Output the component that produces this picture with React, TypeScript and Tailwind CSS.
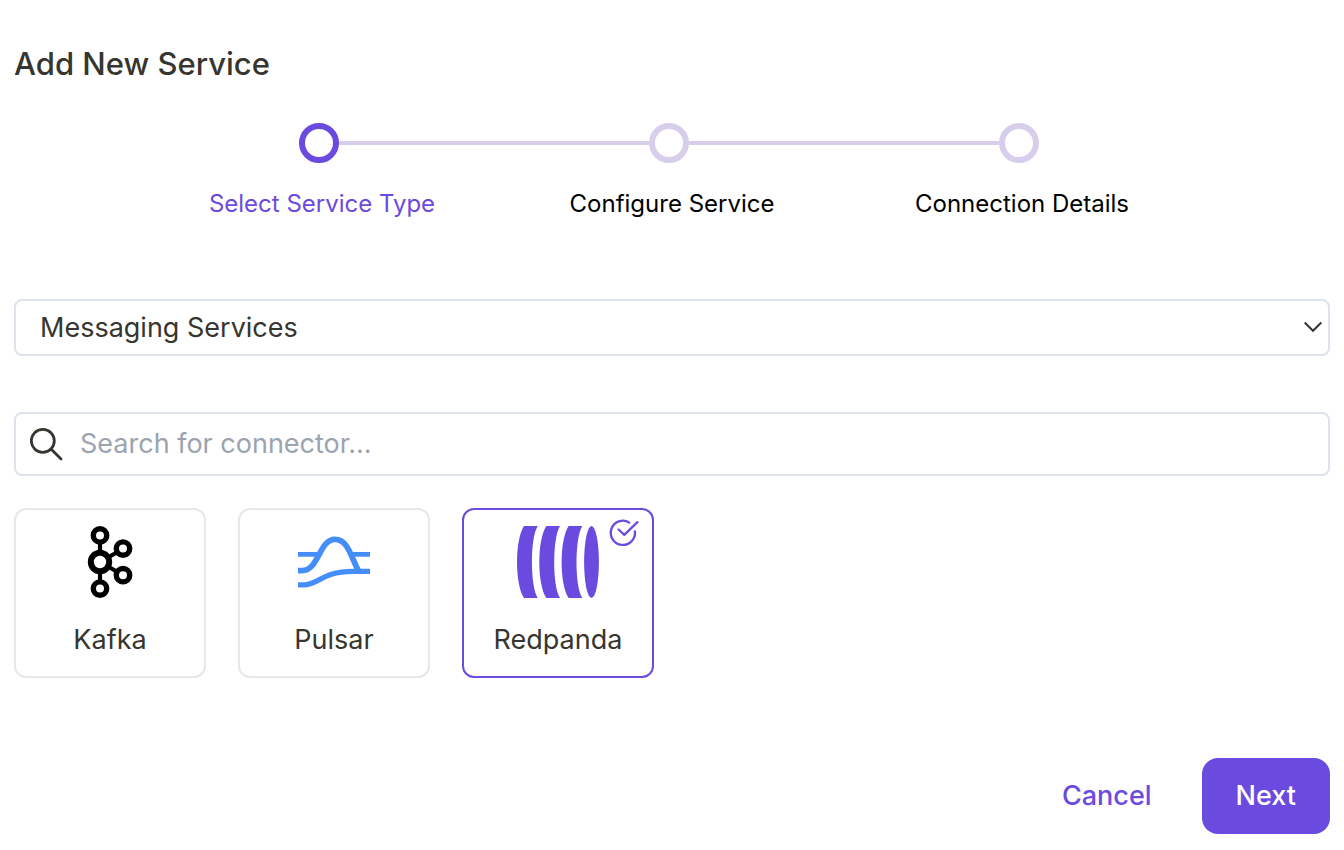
import { useState, type ReactNode } from "react";

const steps = ["Select Service Type", "Configure Service", "Connection Details"];

function KafkaIcon() {
  return (
    <svg viewBox="0 0 72 72" className="h-[72px] w-[72px]" fill="none" stroke="#000" aria-hidden="true">
      <path d="M26 16v12M26 44v12M34 31.500l9-5.200M34 40.500l9 5.200" strokeWidth="4.200" />
      <circle cx="26" cy="9.400" r="6.700" strokeWidth="5.400" />
      <circle cx="26" cy="36" r="9.200" strokeWidth="6" />
      <circle cx="26" cy="62.600" r="6.700" strokeWidth="5.400" />
      <circle cx="49" cy="22.600" r="6.700" strokeWidth="5.400" />
      <circle cx="49" cy="49.200" r="6.700" strokeWidth="5.400" />
    </svg>
  );
}

function PulsarIcon() {
  return (
    <svg viewBox="0 0 72 72" className="h-[72px] w-[72px]" fill="none" stroke="#458ef8" aria-hidden="true">
      <path d="M0 28.400H21M54 28.400H72" strokeWidth="4.800" />
      <path d="M0 44.600H4C21 44.600 21 13.400 37 13.400C50 13.400 53 31 60.500 45" strokeWidth="5.800" />
      <path d="M0 58.900H6C20 58.900 24 45.400 55 45.400H72" strokeWidth="5.200" />
    </svg>
  );
}

function RedpandaIcon() {
  return (
    <svg viewBox="0 0 82 72" className="h-[72px] w-[82px]" fill="#6b4adf" aria-hidden="true">
      <path d="M7 0H20.700C13 12 13 60 20.700 72H7C-2.300 58 -2.300 14 7 0Z" />
      <path d="M29.300 0H43C35.300 12 35.300 60 43 72H29.300C20 58 20 14 29.300 0Z" />
      <path d="M51.600 0H65.300C57.600 12 57.600 60 65.300 72H51.600C42.300 58 42.300 14 51.600 0Z" />
      <ellipse cx="74.500" cy="36" rx="7.400" ry="36" />
    </svg>
  );
}

const connectors: { name: string; icon: ReactNode }[] = [
  { name: "Kafka", icon: <KafkaIcon /> },
  { name: "Pulsar", icon: <PulsarIcon /> },
  { name: "Redpanda", icon: <RedpandaIcon /> },
];

export default function App() {
  const [selected, setSelected] = useState("Redpanda");
  const [query, setQuery] = useState("");

  return (
    <main className="bg-white px-3.5 pt-11 pb-4 font-['Inter','Liberation_Sans',sans-serif] text-[27px] leading-9 text-[#37352f]">
      <h1 className="text-[31px] leading-10 font-medium">Add New Service</h1>

      <ol className="mt-[39px] flex justify-center pr-1.5">
        {steps.map((step, i) => (
          <li key={step} className="w-[350px]" aria-current={i === 0 ? "step" : undefined}>
            <div className="flex items-center">
              <span className={i > 0 ? "h-1 flex-1 bg-[#d7ceec]" : "h-1 flex-1"} />
              <span
                className={
                  i === 0
                    ? "size-10 rounded-full border-6 border-[#6b4adf]"
                    : "size-10 rounded-full border-6 border-[#d7ceec]"
                }
              />
              <span className={i < steps.length - 1 ? "h-1 flex-1 bg-[#d7ceec]" : "h-1 flex-1"} />
            </div>
            <p
              className={
                i === 0
                  ? "mt-6 pl-1.5 text-center text-2xl leading-[34px] text-[#6b4adf]"
                  : "mt-6 pl-1.5 text-center text-2xl leading-[34px] text-black"
              }
            >
              {step}
            </p>
          </li>
        ))}
      </ol>

      <div className="relative mt-[78px]">
        <select
          aria-label="Service type"
          className="block h-[57px] w-full appearance-none rounded-lg border-2 border-[#dce3ec] bg-white pr-12 pl-6"
        >
          <option>Messaging Services</option>
        </select>
        <svg
          viewBox="0 0 20 12"
          className="pointer-events-none absolute top-[22px] right-[7px] h-3 w-5"
          fill="none"
          stroke="#37352f"
          strokeWidth="2"
          aria-hidden="true"
        >
          <path d="M1.700 1.500L10 9.800L18.300 1.500" />
        </svg>
      </div>

      <label className="mt-14 flex h-16 items-center gap-4 rounded-lg border-2 border-[#dce3ec] px-3.5">
        <svg
          viewBox="0 0 34 34"
          className="size-[34px] shrink-0"
          fill="none"
          stroke="#37352f"
          strokeWidth="2.800"
          strokeLinecap="round"
          aria-hidden="true"
        >
          <circle cx="12.800" cy="13.800" r="11.500" />
          <path d="M21.500 22.500L31 32" />
        </svg>
        <input
          type="text"
          aria-label="Search for connector"
          placeholder="Search for connector..."
          value={query}
          onChange={(e) => setQuery(e.target.value)}
          className="min-w-0 flex-1 bg-transparent outline-none placeholder:text-[#9ca3af]"
        />
      </label>

      <div className="mt-8 flex flex-wrap gap-8">
        {connectors.map(({ name, icon }) => (
          <button
            key={name}
            type="button"
            aria-pressed={selected === name}
            onClick={() => setSelected(name)}
            className={
              selected === name
                ? "relative flex h-[170px] w-48 flex-col items-center rounded-xl border-2 border-[#6b4adf] pt-4"
                : "relative flex h-[170px] w-48 flex-col items-center rounded-xl border-2 border-[#e5e7eb] pt-4"
            }
          >
            {icon}
            <span className="mt-6">{name}</span>
            {selected === name && (
              <svg
                viewBox="0 0 30 30"
                className="absolute top-2 right-[13px] size-[30px]"
                fill="none"
                stroke="#6b4adf"
                strokeWidth="2.300"
                strokeLinecap="round"
                strokeLinejoin="round"
                aria-hidden="true"
              >
                <path d="M20.300 4.600A12.100 12.100 0 1 0 25.900 13.500" />
                <path d="M9.600 11.500L15.300 16.800L28.400 4.200" />
              </svg>
            )}
          </button>
        ))}
      </div>

      <div className="mt-20 flex items-center justify-end gap-4 font-medium">
        <button type="button" className="h-[76px] rounded-2xl px-[34px] text-[#6b4adf]">
          Cancel
        </button>
        <button type="button" className="h-[76px] rounded-2xl bg-[#6b4adf] px-[34px] text-white">
          Next
        </button>
      </div>
    </main>
  );
}
